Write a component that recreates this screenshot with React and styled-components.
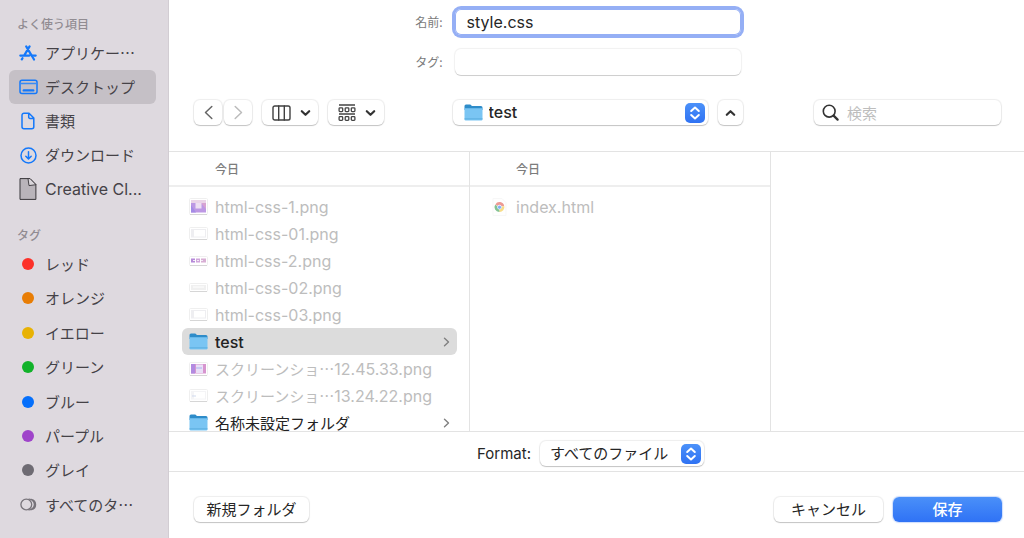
import React from "react";
import styled, { createGlobalStyle, css } from "styled-components";

const latin = `Inter, "Noto Sans CJK JP", sans-serif`;
const japanese = `"Noto Sans CJK JP", Inter, sans-serif`;

const GlobalStyle = createGlobalStyle`
  *, *::before, *::after { box-sizing: border-box; }
  body { margin: 0; background: #fff; font-family: ${latin}; color: #262626; }
  button, input, select { font: inherit; color: inherit; margin: 0; }
  ul { list-style: none; margin: 0; padding: 0; }
  a { color: inherit; text-decoration: none; }
  svg { display: block; flex: none; }
`;

const raised = css`
  border: 0;
  border-radius: 6px;
  background: #fff;
  box-shadow: 0 0 1px 1px rgba(0, 0, 0, 0.07), 0 1px 1px rgba(0, 0, 0, 0.18);
`;

const Dialog = styled.div`
  display: flex;
  height: 100vh;
  min-height: 538px;
`;

/* Sidebar */
const Sidebar = styled.nav`
  display: flex;
  flex-direction: column;
  flex: none;
  width: 169px;
  padding: 12px 12px 16px 9px;
  background: #ded9df;
  border-right: 1px solid #d2cdd3;
`;

const SideHeading = styled.h2`
  margin: ${(p) => (p.$spaced ? "17px" : "0")} 0 0;
  padding-left: 8px;
  font: 500 12px/24px ${japanese};
  color: #918c92;
`;

const SideList = styled.ul`
  display: flex;
  flex-direction: column;
  flex: ${(p) => (p.$grow ? 1 : "none")};
`;

const SideEntry = styled.li`
  display: flex;
  flex: 1 1 34px;
  max-height: 35px;
`;

const SideLink = styled.a`
  display: flex;
  align-items: center;
  flex: 1;
  gap: 8px;
  height: 34px;
  padding-left: 10px;
  border-radius: 6px;
  background: ${(p) => (p.$active ? "#c5c0c6" : "transparent")};
  font-family: ${(p) => (p.$latin ? latin : japanese)};
  font-size: ${(p) => (p.$latin ? "16px" : "15px")};
  line-height: 24px;
  color: #454247;
  white-space: nowrap;
`;

const IconSlot = styled.span`
  display: flex;
  justify-content: center;
  align-items: center;
  width: 18px;
`;

const Dot = styled.span`
  width: 12px;
  height: 12px;
  border-radius: 50%;
  background: ${(p) => p.$color};
`;

/* Main area */
const Main = styled.main`
  display: flex;
  flex-direction: column;
  flex: 1;
  min-width: 0;
`;

const Form = styled.form`
  display: flex;
  flex-direction: column;
  gap: 14px;
  padding: 9px 23px 0 25px;
`;

const Triple = styled.div`
  display: grid;
  grid-template-columns: 1fr 290px 1fr;
  align-items: center;
`;

const FieldLabel = styled.label`
  padding-right: 10px;
  text-align: right;
  font: 12px/18px ${japanese};
  color: #7b7b7b;
`;

const TextField = styled.input`
  height: 26px;
  margin: 0 2px;
  padding: 0 12px;
  border: 0;
  outline: 0;
  border-radius: 6px;
  background: #fff;
  font-size: 16px;
  box-shadow: ${(p) =>
    p.$focused
      ? "0 0 0 1px #95aff5 inset, 0 0 0 3px #95aff5"
      : "0 0 1px 1px rgba(0,0,0,.06), 0 1px 0 rgba(0,0,0,.14)"};
`;

const Toolbar = styled(Triple)`
  padding: 25px 23px 26px 25px;
`;

const Group = styled.div`
  display: flex;
  align-items: center;
  gap: ${(p) => p.$gap || 10}px;
`;

const ToolButton = styled.button`
  ${raised}
  display: flex;
  align-items: center;
  justify-content: center;
  gap: 9px;
  flex: none;
  width: ${(p) => p.$width}px;
  height: 25px;
  padding: 0;
`;

const MenuButton = styled(ToolButton)`
  padding-left: 2px;
`;

const SelectBox = styled.div`
  position: relative;
  flex: ${(p) => (p.$width ? "none" : 1)};
  width: ${(p) => (p.$width ? `${p.$width}px` : "auto")};
`;

const Select = styled.select`
  ${raised}
  appearance: none;
  display: block;
  width: 100%;
  height: 25px;
  padding: 0 30px 2px ${(p) => (p.$icon ? 36 : 10)}px;
  font-family: ${(p) => (p.$icon ? latin : japanese)};
  font-size: ${(p) => (p.$icon ? 16 : 15)}px;
  font-weight: ${(p) => (p.$icon ? 500 : 400)};
  line-height: 24px;
`;

const SelectIcon = styled.span`
  position: absolute;
  top: 4px;
  left: 11px;
  pointer-events: none;
`;

const Stepper = styled.span`
  position: absolute;
  top: 3px;
  right: 3px;
  display: grid;
  place-items: center;
  width: 20px;
  height: 20px;
  border-radius: 5px;
  background: linear-gradient(#4b91f9, #2f72f3);
  pointer-events: none;
`;

const Search = styled.label`
  ${raised}
  display: flex;
  align-items: center;
  justify-self: end;
  gap: 8px;
  width: 187px;
  height: 25px;
  padding: 0 8px;
`;

const SearchInput = styled.input`
  flex: 1;
  min-width: 0;
  padding: 0;
  border: 0;
  outline: 0;
  background: none;
  font: 15px/24px ${japanese};
  &::placeholder { color: #bdbdbd; opacity: 1; }
`;

/* Column browser */
const Browser = styled.section`
  display: flex;
  flex: 1;
  min-height: 0;
  border-top: 1px solid #e3e3e3;
  border-bottom: 1px solid #e3e3e3;
`;

const Column = styled.div`
  display: flex;
  flex-direction: column;
  width: 301px;
  border-right: 1px solid #e3e3e3;
`;

const ColumnHeading = styled.h3`
  flex: none;
  margin: 0;
  padding: 8px 0 7px 46px;
  border-bottom: 2px solid #eee;
  font: 500 12px/18px ${japanese};
  color: #7c7c7c;
`;

const FileList = styled.ul`
  flex: 1;
  min-height: 0;
  padding: 6px 12px 0 13px;
  overflow: auto;
  scrollbar-width: none;
`;

const FileRow = styled.button`
  display: flex;
  align-items: center;
  gap: 7px;
  width: 100%;
  height: 27px;
  padding: 0 7px;
  border: 0;
  border-radius: 6px;
  background: ${(p) => (p.$selected ? "#dcdcdc" : "transparent")};
  text-align: left;
  color: #222;
  &:disabled { color: #bdbdbd; }
`;

const FileIcon = styled.span`
  display: flex;
  justify-content: center;
  width: 19px;
`;

const FileName = styled.span`
  flex: 1;
  font-size: 16px;
  font-weight: ${(p) => (p.$strong ? 500 : 400)};
  line-height: 18px;
  white-space: nowrap;
`;

const Kana = styled.span`
  font: 15px/18px ${japanese};
`;

const FormatBar = styled.div`
  display: flex;
  justify-content: center;
  align-items: baseline;
  gap: 9px;
  height: 40px;
  padding: 9px 12px 0 0;
  border-bottom: 1px solid #e3e3e3;
`;

const FormatLabel = styled.label`
  font-size: 15px;
  line-height: 24px;
`;

const Footer = styled.footer`
  display: flex;
  justify-content: space-between;
  padding: 25px 22px 16px 25px;
`;

const PushButton = styled.button`
  ${raised}
  width: ${(p) => p.$width}px;
  height: 25px;
  padding: 0 0 2px;
  font: 15px/23px ${japanese};
  ${(p) =>
    p.$primary &&
    css`
      background: linear-gradient(#4a90f9, #2f72f5);
      color: #fff;
      font-weight: 500;
      box-shadow: 0 0 1px 1px rgba(50, 115, 245, 0.25);
    `}
`;

/* Icons */
const Line = ({ w, h, color, stroke = 1.5, children }) => (
  <svg width={w} height={h} viewBox={`0 0 ${w} ${h}`} fill="none" stroke={color}
    strokeWidth={stroke} strokeLinecap="round" strokeLinejoin="round" aria-hidden="true">
    {children}
  </svg>
);
const blue = "#1478fa";

const AppsIcon = () => (
  <Line w={18} h={16} color={blue} stroke={2.2}>
    <path d="M7.2 1.4l5.900 10M10.600 1.400L5.100 10.600M1.300 10.600h9M13.400 10.600h3.300M3.500 13.200l-.7 1.200M14 12.800l1 1.700" />
  </Line>
);
const DesktopIcon = () => (
  <Line w={19} h={16} color={blue}>
    <rect x="1" y="1.2" width="17" height="13.4" rx="2" />
    <path d="M1 4.4h17" stroke="#398bf5" />
    <path d="M4.8 11.4h9.4" strokeWidth="2.4" />
  </Line>
);
const DocIcon = () => (
  <Line w={14} h={18} color={blue}>
    <path d="M3 1.2h5l4.8 4.9v8.6a2 2 0 0 1-2 2H3a2 2 0 0 1-2-2V3.200a2 2 0 0 1 2-2zM7.700 1.500v3.700a1.200 1.200 0 0 0 1.200 1.200h3.700" />
  </Line>
);
const DownloadIcon = () => (
  <Line w={17} h={17} color={blue}>
    <circle cx="8.500" cy="8.500" r="7.500" />
    <path d="M8.500 4.800v7M5.800 9.300l2.700 2.600 2.700-2.600" />
  </Line>
);
const FileGlyph = () => (
  <svg width="18" height="22" viewBox="0 0 18 22" aria-hidden="true">
    <path d="M1 .6h10l5.900 6v14.800H1z" fill="#b9b4ba" stroke="#39363a" />
    <path d="M9 .6l1 7 7-.9L11 .6z" fill="#dad6db" stroke="#39363a" strokeWidth=".9" />
  </svg>
);
const AllTagsIcon = () => (
  <Line w={17} h={13} color="#77737a" stroke={1.3}>
    <circle cx="6.300" cy="6.500" r="5.400" />
    <path d="M9 1.100a5.400 5.400 0 0 1 0 10.800M11.300 1.300a5.300 5.300 0 0 1 0 10.400" />
  </Line>
);
const Chevron = ({ d, w, h, color, stroke }) => (
  <Line w={w} h={h} color={color} stroke={stroke}><path d={d} /></Line>
);
const DownChevron = () => <Chevron w={11} h={8} color="#333" stroke={2.200} d="M1.800 2.200L5.500 5.800L9.200 2.200" />;
const ColumnsIcon = () => (
  <Line w={19} h={16} color="#404040" stroke={1.400}>
    <rect x="1" y="1" width="17" height="14" rx="1.800" />
    <path d="M6.700 1v14M12.300 1v14" />
  </Line>
);
const GroupIcon = () => (
  <Line w={18} h={18} color="#444" stroke={1.300}>
    <path d="M1 1h16M1 10h16" strokeLinecap="butt" />
    {[3.800, 12.600].map((y) => [1.100, 7.200, 13.300].map((x) => (
      <rect key={`${x}-${y}`} x={x} y={y} width="3.600" height="3.800" rx=".8" />
    )))}
  </Line>
);
const UpDown = () => (
  <Chevron w={12} h={16} color="#fff" stroke={2} d="M2.200 6L6 2.500L9.800 6M2.200 10L6 13.500L9.800 10" />
);
const SearchIcon = () => (
  <Line w={17} h={17} color="#333" stroke={1.600}>
    <circle cx="7.200" cy="7.200" r="5.900" />
    <path d="M11.600 11.600l4 4" strokeWidth="2.200" />
  </Line>
);
const FolderIcon = () => (
  <svg width="19" height="17" viewBox="0 0 19 17" aria-hidden="true">
    <path d="M.5 2A1.500 1.500 0 0 1 2 .5h4.300l1.700 1.400h9A1.500 1.500 0 0 1 18.500 3.400V6H.5z" fill="#2e8cc9" />
    <path d="M.5 4.300h18v10.900a1.200 1.200 0 0 1-1.200 1.200H1.700A1.200 1.200 0 0 1 .5 15.200z" fill="#7ac5f3" />
    <path d="M.5 14.900h18" stroke="#59addf" />
  </svg>
);
const ChromeDoc = () => (
  <svg width="15" height="18" viewBox="0 0 15 18" aria-hidden="true">
    <path d="M1 .5h9l4 4v13H1z" fill="#fefefe" stroke="#f7f7f7" />
    <g fill="none" strokeWidth="3">
      <path d="M4.600 7.200a3.300 3.300 0 0 1 6.100 1" stroke="#ed9a94" />
      <path d="M10.800 8.400a3.300 3.300 0 0 1-3.500 4.100" stroke="#f7dc86" />
      <path d="M7.300 12.400a3.300 3.300 0 0 1-2.900-5" stroke="#83c293" />
    </g>
    <circle cx="7.500" cy="9.200" r="2" fill="#80aef5" stroke="#fff" strokeWidth=".6" />
  </svg>
);

const thumbs = {
  window: { h: 17, art: (
    <>
      <rect x="2" y="2" width="15" height="12.500" fill="#bd98e4" />
      <path d="M2 2h15v3H2z" fill="#ead4e8" />
      <path d="M2 7l5 7.500H2z" fill="#a58be6" />
      <path d="M12 5h5v6z" fill="#d7a3d2" />
      <rect x="6.500" y="5" width="6" height="5.500" fill="#eedff3" />
    </>) },
  pane: { h: 13, art: (
    <><rect x="2" y="2" width="15" height="8.500" fill="#eeeef1" /><rect x="5" y="3" width="11" height="6.500" fill="#fff" /></>) },
  strip: { h: 10, art: (
    <><rect x="2" y="2.500" width="4" height="4" fill="#b68ad9" /><rect x="7" y="2.500" width="4" height="4" fill="#d0a5db" />
      <rect x="12" y="2.500" width="5" height="4" fill="#d8aed4" /><path d="M4 4.500h11" stroke="#f3eaf7" strokeDasharray="2 2" /></>) },
  thin: { h: 9, art: (
    <><rect x="2" y="2" width="15" height="5" fill="#f0f0f0" /><path d="M4 4h11" stroke="#fff" /></>) },
  desk: { h: 14, art: (
    <><rect x="2" y="2" width="15" height="9.500" fill="#d795cf" /><rect x="2" y="2" width="4" height="9.500" fill="#b28be1" />
      <rect x="7" y="2.500" width="7" height="8.500" fill="#eadff7" /><path d="M7 6h6" stroke="#a9b4ef" /></>) },
  text: { h: 13, art: (
    <><rect x="2" y="2" width="15" height="8.500" fill="#f4f4f6" /><rect x="5" y="3" width="11" height="6.500" fill="#fff" />
      <path d="M3 7h4" stroke="#cfd9ee" /></>) },
};
const Thumb = ({ kind }) => {
  const { h, art } = thumbs[kind];
  return (
    <svg width="19" height={h} viewBox={`0 0 19 ${h}`} aria-hidden="true">
      <rect x=".5" y=".5" width="18" height={h - 1} rx="1" fill="#fff" stroke="#efefef" />
      {art}
      <path d={`M1 ${h - 0.500}h17`} stroke="#d6d6d6" />
    </svg>
  );
};

const favorites = [
  { label: "アプリケー…", icon: <AppsIcon /> },
  { label: "デスクトップ", icon: <DesktopIcon />, active: true },
  { label: "書類", icon: <DocIcon /> },
  { label: "ダウンロード", icon: <DownloadIcon /> },
  { label: "Creative Cl...", icon: <FileGlyph />, latin: true },
];

const tags = [
  ["レッド", "#fc3129"],
  ["オレンジ", "#e87d05"],
  ["イエロー", "#e8b204"],
  ["グリーン", "#12b22a"],
  ["ブルー", "#056ffb"],
  ["パープル", "#9f44ca"],
  ["グレイ", "#6e6b73"],
];

const files = [
  { name: "html-css-1.png", thumb: "window" },
  { name: "html-css-01.png", thumb: "pane" },
  { name: "html-css-2.png", thumb: "strip" },
  { name: "html-css-02.png", thumb: "thin" },
  { name: "html-css-03.png", thumb: "pane" },
  { name: "test", folder: true, selected: true },
  { kana: "スクリーンショ…", name: "12.45.33.png", thumb: "desk" },
  { kana: "スクリーンショ…", name: "13.24.22.png", thumb: "text" },
  { kana: "名称未設定フォルダ", name: "", folder: true },
];

const SideItem = ({ label, icon, active, latin: isLatin }) => (
  <SideEntry>
    <SideLink href="#" $active={active} $latin={isLatin}>
      <IconSlot>{icon}</IconSlot>
      {label}
    </SideLink>
  </SideEntry>
);

const FileItem = ({ kana, name, icon, folder, selected }) => (
  <li>
    <FileRow type="button" disabled={!folder} $selected={selected}>
      <FileIcon>{icon}</FileIcon>
      <FileName $strong={folder}>
        {kana && <Kana>{kana}</Kana>}
        {name}
      </FileName>
      {folder && <Chevron w={7} h={10} color="#808080" stroke={1.400} d="M1.500 1.200L5.500 5L1.500 8.800" />}
    </FileRow>
  </li>
);

export default function App() {
  return (
    <Dialog lang="ja">
      <GlobalStyle />
      <Sidebar>
        <SideHeading>よく使う項目</SideHeading>
        <SideList>
          {favorites.map((f) => <SideItem key={f.label} {...f} />)}
        </SideList>
        <SideHeading $spaced>タグ</SideHeading>
        <SideList $grow>
          {tags.map(([label, color]) => (
            <SideItem key={label} label={label} icon={<Dot $color={color} />} />
          ))}
          <SideItem label="すべてのタ…" icon={<AllTagsIcon />} />
        </SideList>
      </Sidebar>

      <Main>
        <Form onSubmit={(e) => e.preventDefault()}>
          <Triple>
            <FieldLabel htmlFor="name">名前:</FieldLabel>
            <TextField id="name" defaultValue="style.css" $focused />
          </Triple>
          <Triple>
            <FieldLabel htmlFor="tags">タグ:</FieldLabel>
            <TextField id="tags" />
          </Triple>
        </Form>

        <Toolbar>
          <Group>
            <Group $gap={2}>
              <ToolButton $width={28} aria-label="戻る">
                <Chevron w={9} h={15} color="#666" stroke={1.500} d="M7.800 1.500L1.500 7.500L7.800 13.500" />
              </ToolButton>
              <ToolButton $width={28} aria-label="進む">
                <Chevron w={9} h={15} color="#bbb" stroke={1.500} d="M1.200 1.500L7.500 7.500L1.200 13.500" />
              </ToolButton>
            </Group>
            <MenuButton $width={56} aria-label="カラム表示"><ColumnsIcon /><DownChevron /></MenuButton>
            <MenuButton $width={56} aria-label="グループ分け"><GroupIcon /><DownChevron /></MenuButton>
          </Group>
          <Group>
            <SelectBox>
              <Select $icon aria-label="場所" defaultValue="test"><option>test</option></Select>
              <SelectIcon><FolderIcon /></SelectIcon>
              <Stepper><UpDown /></Stepper>
            </SelectBox>
            <ToolButton $width={25} aria-label="折りたたむ">
              <Chevron w={11} h={8} color="#333" stroke={2.200} d="M1.800 5.800L5.500 2.200L9.200 5.800" />
            </ToolButton>
          </Group>
          <Search>
            <SearchIcon />
            <SearchInput placeholder="検索" aria-label="検索" />
          </Search>
        </Toolbar>

        <Browser>
          <Column>
            <ColumnHeading>今日</ColumnHeading>
            <FileList>
              {files.map((f, i) => (
                <FileItem key={i} {...f} icon={f.folder ? <FolderIcon /> : <Thumb kind={f.thumb} />} />
              ))}
            </FileList>
          </Column>
          <Column>
            <ColumnHeading>今日</ColumnHeading>
            <FileList>
              <FileItem name="index.html" icon={<ChromeDoc />} />
            </FileList>
          </Column>
        </Browser>

        <FormatBar>
          <FormatLabel htmlFor="format">Format:</FormatLabel>
          <SelectBox $width={164}>
            <Select id="format"><option>すべてのファイル</option></Select>
            <Stepper><UpDown /></Stepper>
          </SelectBox>
        </FormatBar>

        <Footer>
          <PushButton $width={115}>新規フォルダ</PushButton>
          <Group>
            <PushButton $width={109}>キャンセル</PushButton>
            <PushButton $width={109} $primary>保存</PushButton>
          </Group>
        </Footer>
      </Main>
    </Dialog>
  );
}
